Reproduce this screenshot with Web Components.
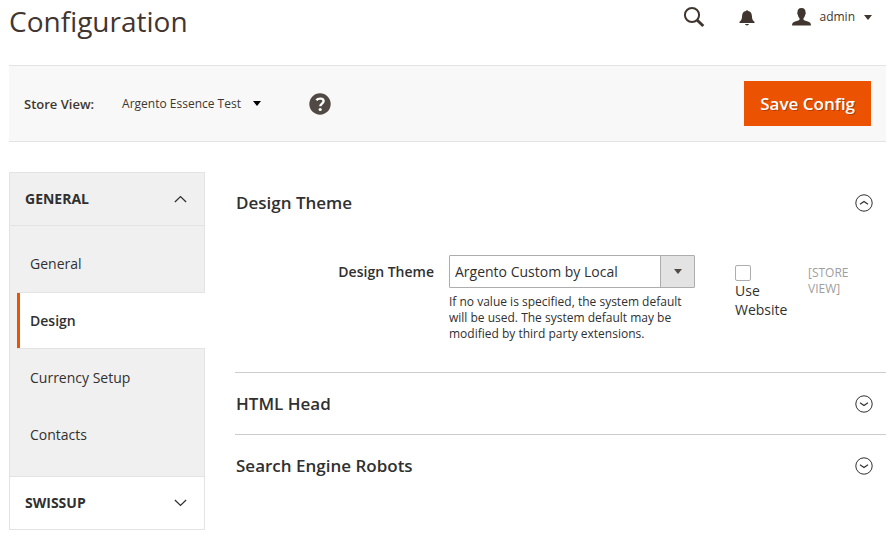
<!DOCTYPE html>
<html lang="en">
<head>
<meta charset="utf-8">
<title>Configuration</title>
<style>
body { margin: 0; background: #fff; color: #303030; font: 14px/19px "Open Sans", "Noto Sans", sans-serif; }
</style>
</head>
<body>
<config-page>
  <page-header slot="header" heading="Configuration" user="admin"></page-header>
  <scope-bar slot="bar" label="Store View:" scope="Argento Essence Test" action="Save Config"></scope-bar>
  <config-nav slot="nav">
    <nav-group label="GENERAL" open>
      <nav-item>General</nav-item>
      <nav-item current>Design</nav-item>
      <nav-item>Currency Setup</nav-item>
      <nav-item>Contacts</nav-item>
    </nav-group>
    <nav-group label="SWISSUP"></nav-group>
  </config-nav>
  <config-section label="Design Theme" open><theme-field></theme-field></config-section>
  <config-section label="HTML Head"></config-section>
  <config-section label="Search Engine Robots"></config-section>
</config-page>
<script>
const base = `*{box-sizing:border-box} button{font:inherit;color:inherit;background:none;border:0;padding:0;margin:0;text-align:left;cursor:pointer}`;
const define = (name, render, ready) => customElements.define(name, class extends HTMLElement {
  connectedCallback() {
    if (this.shadowRoot) return;
    this.attachShadow({ mode: 'open' }).innerHTML = `<style>${base}</style>` + render(this);
    if (ready) ready(this);
  }
});

define('config-page', () => `
<style>
:host{display:block;padding:0 10px 0 9px}
.cols{display:grid;grid-template-columns:196px minmax(0,1fr);gap:30px;margin-top:30px;align-items:start}
</style>
<slot name="header"></slot><slot name="bar"></slot>
<div class="cols"><slot name="nav"></slot><main><slot></slot></main></div>`);

define('page-header', el => `
<style>
:host{display:flex;justify-content:space-between;align-items:flex-start;height:65px;color:#41362f}
h1{margin:0;font-size:28px;line-height:43px;font-weight:400}
.tools{display:flex;align-items:center;height:34px;padding-right:14px}
svg{display:block}
.search{margin-right:34px}.bell{margin-right:37px}
.user{display:flex;align-items:center;font-size:12px;line-height:18px}
.user span{margin:0 9px 0 8px}
</style>
<h1>${el.getAttribute('heading')}</h1>
<div class="tools">
<button class="search" aria-label="Search"><svg width="22" height="22" viewBox="0 0 22 22" fill="none" stroke="#41362f"><circle cx="9" cy="9" r="7.1" stroke-width="2"/><path d="M14 14l6.3 6" stroke-width="3"/></svg></button>
<button class="bell" aria-label="Notifications"><svg width="16" height="18" viewBox="0 0 16 18" fill="#41362f"><path d="M7 3.100C7 1.800 9 1.800 9 3.100c2.600.5 3.700 2.200 3.900 4.600.2 3.300.6 4.600 2.600 6.100v1.100H.5v-1.100c2-1.500 2.400-2.800 2.600-6.100.2-2.400 1.300-4.100 3.900-4.600zM6 16h4c-.3 1.900-3.700 1.900-4 0z"/></svg></button>
<button class="user"><svg width="19" height="18" viewBox="0 0 19 18" fill="#41362f"><path d="M9.500 0c2.900 0 4.200 1.700 4 4.600.5.3.4 1.500-.3 2.200-.3 1.600-.8 2.600-1.700 3.400v1.500c1.100 1 4.200 1.300 6 2.500 1 .7 1.400 1.700 1.500 3.300H0c.1-1.600.5-2.600 1.500-3.300 1.800-1.200 4.900-1.500 6-2.500v-1.500C6.600 9.400 6.100 8.400 5.800 6.800c-.7-.7-.8-1.900-.3-2.200C5.300 1.700 6.600 0 9.500 0z"/></svg><span>${el.getAttribute('user')}</span><svg width="8" height="5" viewBox="0 0 8 5"><path d="M0 0h8L4 5z" fill="#41362f"/></svg></button>
</div>`);

define('scope-bar', el => `
<style>
:host{display:flex;align-items:center;padding:15px;background:#f8f8f8;border:solid #e3e3e3;border-width:1px 0;font-size:12px;line-height:18px;color:#41362f}
strong{font-weight:600;font-size:13px}
.scope{display:flex;align-items:center;gap:12px;margin-left:28px}
.help{margin-left:48px}
svg{display:block}
.save{margin-left:auto;padding:0 16px;background:#eb5202;color:#fff;font-size:17px;font-weight:600;line-height:45px;text-shadow:1px 1px 0 rgba(0,0,0,.25)}
</style>
<strong>${el.getAttribute('label')}</strong>
<button class="scope">${el.getAttribute('scope')}<svg width="8" height="5" viewBox="0 0 8 5"><path d="M0 0h8L4 5z"/></svg></button>
<button class="help" aria-label="Help"><svg width="22" height="22" viewBox="0 0 22 22"><circle cx="11" cy="11" r="10.700" fill="#514943"/><path d="M7.400 7.300c1.700-2.300 7.200-2.400 7.200.8 0 2.500-3.300 2.500-3.300 5.200" fill="none" stroke="#fff" stroke-width="2.400"/><circle cx="11.200" cy="16.500" r="1.600" fill="#fff"/></svg></button>
<button class="save">${el.getAttribute('action')}</button>`);

define('config-nav', () => `
<style>:host{display:block;border:1px solid #e3e3e3;border-top:0;border-right:0}</style>
<nav aria-label="Configuration"><slot></slot></nav>`);

define('nav-group', el => `
<style>
:host{display:block}
:host([open]){background:#f0f0f0}
.title{display:flex;justify-content:space-between;align-items:center;width:100%;padding:16px 17px 17px 15px;font-weight:700;border:solid #e3e3e3;border-width:1px 1px 0 0}
.items{display:none}
:host([open]) .items{display:block}
.items div{border-right:1px solid #e3e3e3}
.items .first{border-top:1px solid #e3e3e3;height:10px}
.items .last{height:13px}
:host([open]) svg{transform:rotate(180deg)}
</style>
<button class="title">${el.getAttribute('label')}<svg width="13" height="8" viewBox="0 0 13 8" fill="none" stroke="#303030" stroke-width="1.300"><path d="M.9 1l5.600 5.400L12.100 1"/></svg></button>
<div class="items"><div class="first"></div><slot></slot><div class="last"></div></div>`,
el => el.shadowRoot.querySelector('.title').onclick = () => el.toggleAttribute('open'));

define('nav-item', () => `
<style>
:host{display:block}
a{display:block;padding:19px 16px 19px 20px;color:inherit;text-decoration:none;border-right:1px solid #e3e3e3}
:host([current]) a{margin-left:7px;padding:18px 16px 18px 13px;background:#fff linear-gradient(#eb5202,#eb5202) left/3px 100% no-repeat;border:solid #e3e3e3;border-width:1px 0;font-weight:600}
</style>
<a href="#"><slot></slot></a>`);

define('config-section', el => `
<style>
:host{display:block;border-bottom:1px solid #ccc}
:host(:last-of-type){border-bottom:0}
h2{margin:0;font-size:17px;line-height:23px;font-weight:600}
button{display:flex;justify-content:space-between;align-items:center;width:100%;padding:19px 13px 19px 1px}
.body{display:none;padding:22px 0 30px}
:host([open]) .body{display:block}
:host([open]) svg{transform:rotate(180deg)}
</style>
<h2><button>${el.getAttribute('label')}<svg width="18" height="18" viewBox="0 0 18 18" fill="none" stroke="#303030"><circle cx="9" cy="9" r="8.200" stroke-width="1"/><path d="M5 7.800l4 2.700 4-2.700" stroke-width="1.200"/></svg></button></h2>
<div class="body"><slot></slot></div>`,
el => el.shadowRoot.querySelector('button').onclick = () => el.toggleAttribute('open'));

define('theme-field', () => `
<style>
:host{display:grid;grid-template-columns:199fr 246fr 83fr 78fr;column-gap:15px}
.name{padding-top:7px;text-align:right;font-weight:600}
.pick{display:grid}
.pick>*{grid-area:1/1}
select{width:100%;height:33px;padding:0 40px 0 5px;font:inherit;color:inherit;background:linear-gradient(#adadad,#adadad) right 33px top/1px 100% no-repeat,linear-gradient(#e3e3e3,#e3e3e3) right/33px 100% no-repeat #fff;border:1px solid #adadad;border-radius:1px;appearance:none}
.pick svg{justify-self:end;align-self:center;margin-right:13px;pointer-events:none}
p{margin:6px 0 0;font-size:12px;line-height:16px}
.use{padding:10px 0 0 25px}
input{display:block;appearance:none;width:16px;height:16px;margin:0;border:1px solid #adadad;border-radius:2px;background:#fff}
input:checked{background:#514943}
label{display:block}
.scope{padding:10px 20px 0 0;font-size:12px;line-height:16px;color:#9e9e9e}
</style>
<label class="name" for="theme">Design Theme</label>
<div><div class="pick"><select id="theme"><option>Argento Custom by Local</option></select><svg width="8" height="5" viewBox="0 0 8 5"><path d="M0 0h8L4 5z" fill="#514943"/></svg></div>
<p>If no value is specified, the system default will be used. The system default may be modified by third party extensions.</p></div>
<div class="use"><input type="checkbox" id="inherit"><label for="inherit">Use Website</label></div>
<div class="scope">[STORE VIEW]</div>`);
</script>
</body>
</html>
